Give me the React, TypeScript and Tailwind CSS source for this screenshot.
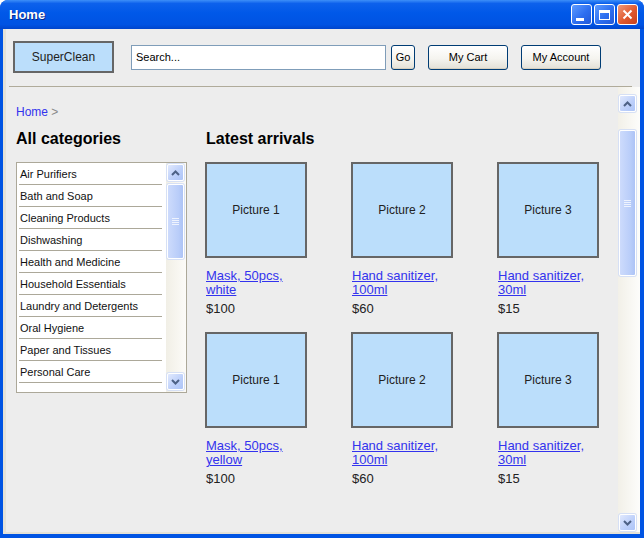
import React from "react";

function ScrollBtn({ dir }: { dir: "up" | "down" }) {
  return (
    <div className="w-[17px] h-[17px] shrink-0 rounded-[2px] border border-white bg-[linear-gradient(135deg,#e1e9fd,#bccffa_60%,#aec5f7)] flex items-center justify-center shadow-[0_0_0_1px_#d6e0f5]">
      <svg width="9" height="6" viewBox="0 0 9 6">
        <path
          d={dir === "up" ? "M1 5 L4.5 1.5 L8 5" : "M1 1 L4.5 4.5 L8 1"}
          stroke="#4d6185"
          strokeWidth="2"
          fill="none"
        />
      </svg>
    </div>
  );
}

function Thumb({ h }: { h: string }) {
  return (
    <div
      className={`w-[17px] ${h} shrink-0 rounded-[2px] border border-white bg-[linear-gradient(to_right,#cddbfc,#b9cdf9_70%,#adc3f6)] flex flex-col items-center justify-center gap-[1px] shadow-[0_0_0_1px_#d6e0f5]`}
    >
      <div className="w-[7px] h-[1px] bg-[#eef3fe]" />
      <div className="w-[7px] h-[1px] bg-[#eef3fe]" />
      <div className="w-[7px] h-[1px] bg-[#eef3fe]" />
      <div className="w-[7px] h-[1px] bg-[#eef3fe]" />
    </div>
  );
}

const categories = [
  "Air Purifiers",
  "Bath and Soap",
  "Cleaning Products",
  "Dishwashing",
  "Health and Medicine",
  "Household Essentials",
  "Laundry and Detergents",
  "Oral Hygiene",
  "Paper and Tissues",
  "Personal Care",
];

const products = [
  { pic: "Picture 1", name: "Mask, 50pcs, white", price: "$100" },
  { pic: "Picture 2", name: "Hand sanitizer, 100ml", price: "$60" },
  { pic: "Picture 3", name: "Hand sanitizer, 30ml", price: "$15" },
  { pic: "Picture 1", name: "Mask, 50pcs, yellow", price: "$100" },
  { pic: "Picture 2", name: "Hand sanitizer, 100ml", price: "$60" },
  { pic: "Picture 3", name: "Hand sanitizer, 30ml", price: "$15" },
];

const xpBtn =
  "h-[25px] rounded-[3px] border border-[#003c74] bg-[linear-gradient(to_bottom,#ffffff,#f5f4ef_55%,#e3e0d6)] text-[11px] text-black flex items-center justify-center shadow-[inset_0_-1px_0_#d6d0c0]";

export default function App() {
  return (
    <div className="w-[644px] h-[538px] bg-white font-['Liberation_Sans',Arial,sans-serif]">
      <div className="w-full h-full rounded-t-[8px] bg-[#0054e3] flex flex-col overflow-hidden">
        {/* Title bar */}
        <div className="h-[29px] shrink-0 flex items-center pl-[9px] pr-[6px] bg-[linear-gradient(to_bottom,#3d8ff8_0%,#0d61ec_12%,#0058e8_45%,#0053e3_85%,#0045cc_100%)]">
          <div className="text-white font-bold text-[13px] [text-shadow:1px_1px_0_#0a2a8a] flex-1">
            Home
          </div>
          <div className="flex gap-[2px]">
            <div className="w-[21px] h-[21px] rounded-[3px] border border-white bg-[linear-gradient(135deg,#5e9bff,#2d6ff0_55%,#2259d8)] relative">
              <div className="absolute left-[4px] top-[13px] w-[8px] h-[3px] bg-white" />
            </div>
            <div className="w-[21px] h-[21px] rounded-[3px] border border-white bg-[linear-gradient(135deg,#5e9bff,#2d6ff0_55%,#2259d8)] relative">
              <div className="absolute left-[4px] top-[5px] w-[11px] h-[10px] border border-white border-t-[3px]" />
            </div>
            <div className="w-[21px] h-[21px] rounded-[3px] border border-white bg-[linear-gradient(135deg,#f09a78,#e0592f_55%,#c8411c)] flex items-center justify-center">
              <svg width="11" height="11" viewBox="0 0 11 11">
                <path d="M1.5 1.5 L9.5 9.5 M9.5 1.5 L1.5 9.5" stroke="white" strokeWidth="2" />
              </svg>
            </div>
          </div>
        </div>

        {/* Body */}
        <div className="flex-1 min-h-0 ml-[3px] mr-[4px] mb-[4px] bg-[#ededed] border-l-[3px] border-b-[2px] border-[#e4e2d8] flex flex-col">
          {/* Header */}
          <div className="flex items-center pl-[7px] pt-[12px] pb-[13px]">
            <div className="w-[101px] h-[32px] border-2 border-[#666666] bg-[#bbdefb] flex items-center justify-center text-[12px] text-[#222]">
              SuperClean
            </div>
            <input
              className="ml-[17px] w-[255px] h-[25px] bg-white border border-[#7f9db9] px-[4px] text-[11px] text-black placeholder:text-black outline-none"
              placeholder="Search..."
              readOnly
            />
            <div className={`ml-[5px] w-[24px] ${xpBtn}`}>Go</div>
            <div className={`ml-[13px] w-[80px] ${xpBtn}`}>My Cart</div>
            <div className={`ml-[13px] w-[80px] ${xpBtn}`}>My Account</div>
          </div>
          <div className="h-[1px] bg-[#b0ab9a] ml-[3px] mr-[8px] shrink-0" />

          {/* Main row */}
          <div className="flex-1 min-h-0 flex">
            <div className="flex-1 pl-[10px] pt-[18px]">
              <div className="text-[12px] leading-[14px] text-[#888]">
                <span className="text-[#3333ee]">Home</span> &gt;
              </div>
              <div className="flex mt-[10px]">
                {/* Left column */}
                <div className="w-[171px] shrink-0">
                  <div className="text-[16px] leading-[20px] font-bold text-black">All categories</div>
                  <div className="mt-[13px] w-[171px] h-[231px] border border-[#aca899] bg-white flex">
                    <div className="flex-1 pl-[2px] pr-[4px]">
                      {categories.map((c) => (
                        <div
                          key={c}
                          className="h-[22px] border-b border-[#aca899] flex items-center pl-[1px] pt-[1px] text-[11px] text-[#111]"
                        >
                          {c}
                        </div>
                      ))}
                    </div>
                    <div className="w-[20px] h-full bg-[linear-gradient(to_right,#f1efe6,#fcfbf8)] flex flex-col pl-[1px] pt-[1px] pb-[2px]">
                      <ScrollBtn dir="up" />
                      <div className="mt-[3px]">
                        <Thumb h="h-[75px]" />
                      </div>
                      <div className="mt-auto">
                        <ScrollBtn dir="down" />
                      </div>
                    </div>
                  </div>
                </div>

                {/* Right column */}
                <div className="ml-[18px]">
                  <div className="text-[16px] leading-[20px] font-bold text-black pl-[1px]">Latest arrivals</div>
                  <div className="mt-[13px] grid grid-cols-[102px_102px_102px] gap-x-[44px] gap-y-[16px]">
                    {products.map((p, i) => (
                      <div key={i} className="flex flex-col">
                        <div className="w-[102px] h-[96px] border-2 border-[#666666] bg-[#bbdefb] flex items-center justify-center text-[12px] text-[#222]">
                          {p.pic}
                        </div>
                        <div className="mt-[11px] text-[13px] leading-[14px] text-[#3333ee] underline pl-[1px]">
                          {p.name}
                        </div>
                        <div className="mt-[5px] text-[13px] leading-[14px] text-[#222] pl-[1px]">
                          {p.price}
                        </div>
                      </div>
                    ))}
                  </div>
                </div>
              </div>
            </div>

            {/* Page scrollbar */}
            <div className="w-[22px] shrink-0 h-full bg-[linear-gradient(to_right,#f2f0e8,#fdfdfb)] flex flex-col pl-[1px] pt-[8px] pb-[1px]">
              <ScrollBtn dir="up" />
              <div className="mt-[18px]">
                <Thumb h="h-[146px]" />
              </div>
              <div className="mt-auto">
                <ScrollBtn dir="down" />
              </div>
            </div>
          </div>
        </div>
      </div>
    </div>
  );
}
